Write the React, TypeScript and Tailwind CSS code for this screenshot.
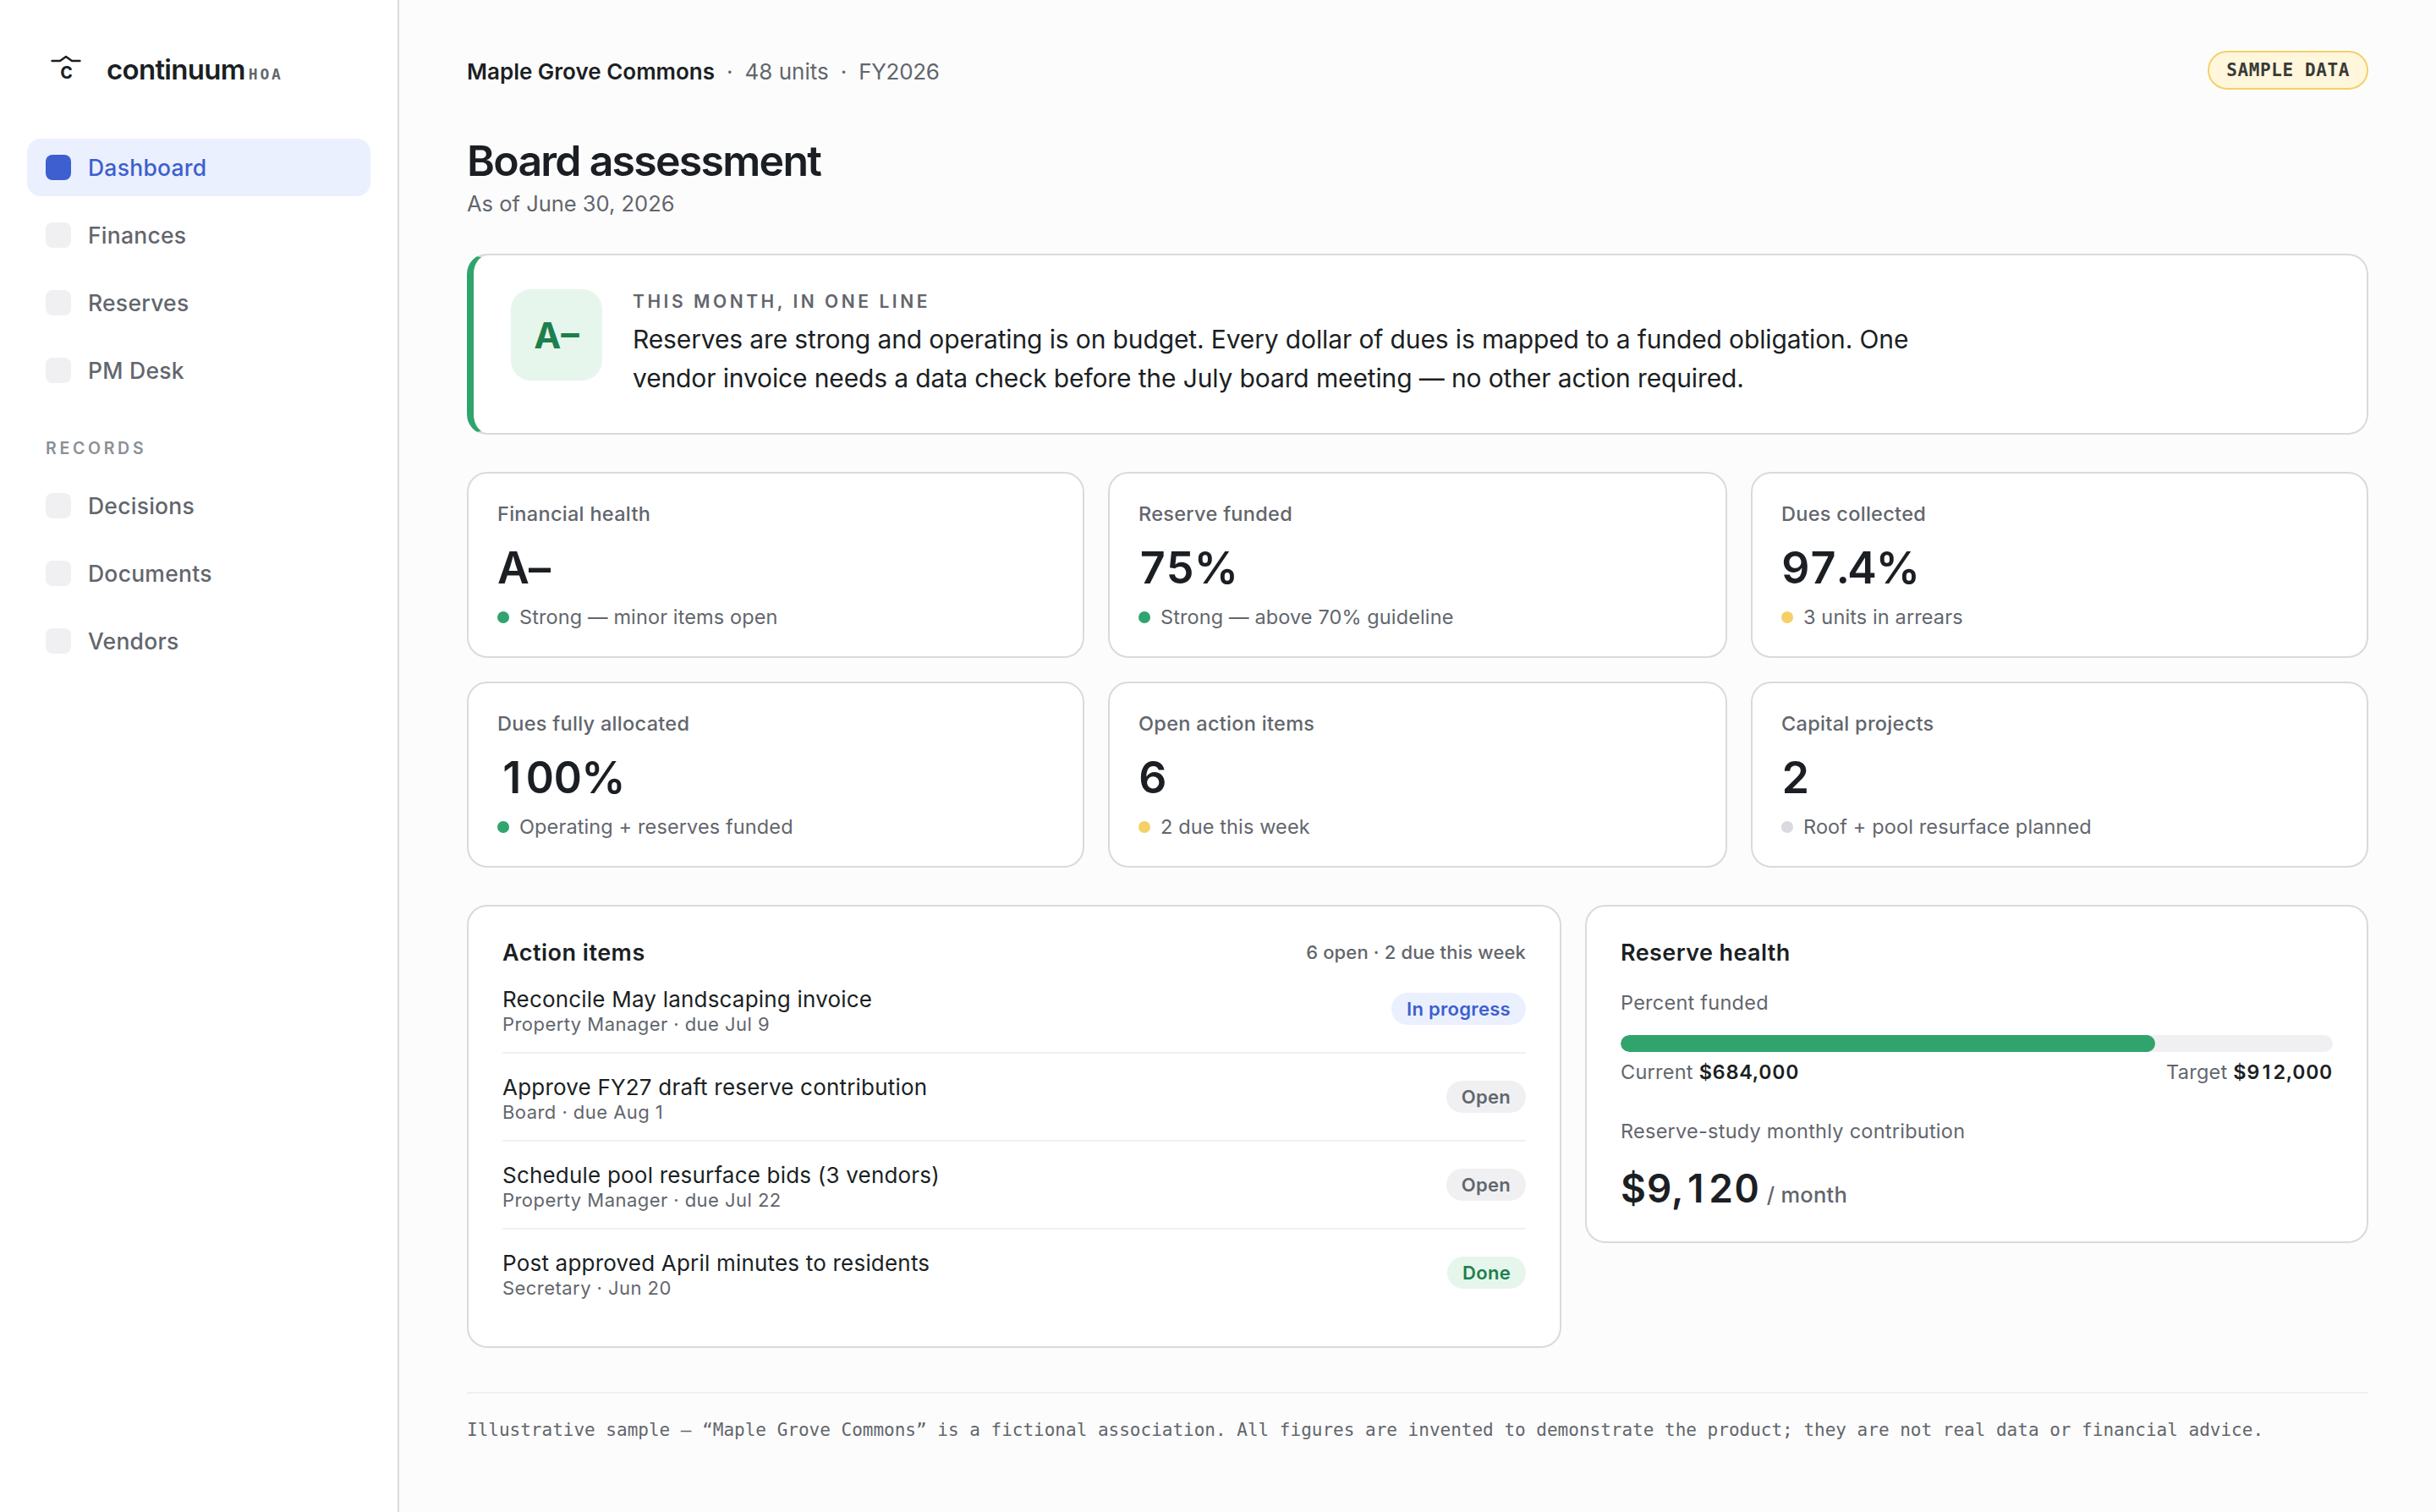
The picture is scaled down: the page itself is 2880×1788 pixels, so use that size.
import clsx from 'clsx'

type Tone = 'good' | 'warn' | 'neutral'
type Status = 'In progress' | 'Open' | 'Done'

const mainNav = ['Dashboard', 'Finances', 'Reserves', 'PM Desk']
const recordsNav = ['Decisions', 'Documents', 'Vendors']

const metrics: { label: string; value: string; note: string; tone: Tone }[] = [
  { label: 'Financial health', value: 'A–', note: 'Strong — minor items open', tone: 'good' },
  { label: 'Reserve funded', value: '75%', note: 'Strong — above 70% guideline', tone: 'good' },
  { label: 'Dues collected', value: '97.4%', note: '3 units in arrears', tone: 'warn' },
  { label: 'Dues fully allocated', value: '100%', note: 'Operating + reserves funded', tone: 'good' },
  { label: 'Open action items', value: '6', note: '2 due this week', tone: 'warn' },
  { label: 'Capital projects', value: '2', note: 'Roof + pool resurface planned', tone: 'neutral' },
]

const actions: { title: string; meta: string; status: Status }[] = [
  { title: 'Reconcile May landscaping invoice', meta: 'Property Manager · due Jul 9', status: 'In progress' },
  { title: 'Approve FY27 draft reserve contribution', meta: 'Board · due Aug 1', status: 'Open' },
  { title: 'Schedule pool resurface bids (3 vendors)', meta: 'Property Manager · due Jul 22', status: 'Open' },
  { title: 'Post approved April minutes to residents', meta: 'Secretary · Jun 20', status: 'Done' },
]

const dotColor: Record<Tone, string> = {
  good: 'bg-[#30a46c]',
  warn: 'bg-[#f5d067]',
  neutral: 'bg-[#d9dae0]',
}

const statusColor: Record<Status, string> = {
  'In progress': 'bg-[#ebf0ff] text-[#3d5fd0]',
  Open: 'bg-[#f0f0f3] text-[#62666d]',
  Done: 'bg-[#e6f6ec] text-[#1d7f4e]',
}

// Inter's tabular 1 has a foot serif, so the plain 1 is centred in a digit-wide box instead
function Figures({ value }: { value: string }) {
  return (
    <span className="tabular-nums">
      {value.split('').map((char, i) =>
        char === '1' ? (
          <span key={i} className="inline-block w-[0.645em] text-center normal-nums">
            1
          </span>
        ) : (
          char
        ),
      )}
    </span>
  )
}

function Logo() {
  return (
    <svg className="h-10 w-12" viewBox="0 0 48 40" fill="none" aria-hidden="true">
      <path
        d="M7.5 12H17L24 7L31 12H40.5"
        stroke="#1b1f24"
        strokeWidth="2.4"
        strokeLinecap="round"
        strokeLinejoin="round"
      />
      <text x="24.7" y="32.8" textAnchor="middle" fill="#1b1f24" className="text-[26px] font-semibold">
        c
      </text>
    </svg>
  )
}

function NavItem({ label, active }: { label: string; active?: boolean }) {
  return (
    <a
      className={clsx(
        'flex h-[68px] items-center gap-5 rounded-[16px] pl-[22px] text-[26.5px] font-medium tracking-[0.25px]',
        active ? 'bg-[#ebf0ff] text-[#3d5fd0]' : 'text-[#62666d]',
      )}
    >
      <span className={clsx('size-[30px] rounded-[8px]', active ? 'bg-[#3d5fd0]' : 'bg-[#f0f0f3]')} />
      <span className="pt-0.5">{label}</span>
    </a>
  )
}

function Sidebar() {
  return (
    <aside className="w-[472px] shrink-0 border-r-2 border-[#d9dae0] bg-white px-8 pt-[60px]">
      <div className="flex h-11 pl-[22px]">
        <Logo />
        <div className="ml-6 flex items-baseline pt-0.5">
          <span className="text-[33px] leading-10 font-semibold tracking-[-0.7px]">continuum</span>
          <span className="ml-1 font-['DejaVu_Sans_Mono',monospace] text-[18px] font-bold tracking-[2.8px] text-[#62666d]">
            HOA
          </span>
        </div>
      </div>

      <nav className="mt-[60px] flex flex-col gap-3">
        {mainNav.map((label, i) => (
          <NavItem key={label} label={label} active={i === 0} />
        ))}
      </nav>

      <div className="mt-[46px] mb-[22px] pl-[22px] text-[19.5px] leading-6 font-semibold tracking-[3.7px] text-[#8b8f96]">
        RECORDS
      </div>
      <nav className="flex flex-col gap-3">
        {recordsNav.map((label) => (
          <NavItem key={label} label={label} />
        ))}
      </nav>
    </aside>
  )
}

function Summary() {
  return (
    <section className="mt-[43px] flex h-[214px] gap-9 rounded-[24px] border-2 border-l-8 border-[#d9dae0] border-l-[#30a46c] bg-white pt-10 pl-11">
      <div className="flex size-[108px] shrink-0 items-center justify-center rounded-[24px] bg-[#e6f6ec] text-[43px] font-bold text-[#1d7f4e]">
        A–
      </div>
      <div>
        <div className="pt-px text-[21px] leading-7 font-semibold tracking-[3.55px] text-[#62666d]">
          THIS MONTH, IN ONE LINE
        </div>
        <p className="mt-[7px] max-w-[1530px] text-[30px] leading-[46px] tracking-[-0.13px]">
          Reserves are strong and operating is on budget. Every dollar of dues is mapped to a funded obligation. One
          vendor invoice needs a data check before the July board meeting — no other action required.
        </p>
      </div>
    </section>
  )
}

function MetricCard({ label, value, note, tone }: (typeof metrics)[number]) {
  return (
    <div className="h-[220px] rounded-[24px] border-2 border-[#d9dae0] bg-white px-[34px] pt-[34px]">
      <div className="text-[23.5px] leading-[27px] font-medium tracking-[0.3px] text-[#62666d]">{label}</div>
      <div className="mt-[21px] text-[52px] leading-[60px] font-semibold tracking-[-0.8px]">
        <Figures value={value} />
      </div>
      <div className="mt-[13px] flex items-center gap-3 text-[23.5px] leading-7 tracking-[0.12px] text-[#62666d]">
        <span className={clsx('size-3.5 rounded-full', dotColor[tone])} />
        <span className="pt-px">{note}</span>
      </div>
    </div>
  )
}

function ActionItems() {
  return (
    <section className="h-[524px] rounded-[24px] border-2 border-[#d9dae0] bg-white px-10 pt-10">
      <div className="flex h-7 justify-between leading-7">
        <h2 className="pt-px text-[27px] font-semibold tracking-[0.5px]">Action items</h2>
        <span className="text-[22px] font-medium tracking-[0.15px] text-[#62666d]">6 open · 2 due this week</span>
      </div>
      <ul className="mt-0.5 divide-y-2 divide-[#f0f0f3]">
        {actions.map((item) => (
          <li key={item.title} className="flex h-[104px] items-center justify-between last:h-[102px]">
            <div className="pt-0.5">
              <div className="text-[26px] leading-[33px] tracking-[0.2px]">{item.title}</div>
              <div className="text-[22px] leading-[26px] tracking-[0.45px] text-[#62666d]">{item.meta}</div>
            </div>
            <span
              className={clsx(
                'flex h-[38px] items-center rounded-full px-[18px] pt-px text-[22px] font-semibold tracking-[0.3px]',
                statusColor[item.status],
              )}
            >
              {item.status}
            </span>
          </li>
        ))}
      </ul>
    </section>
  )
}

function ReserveHealth() {
  const current = 684000
  const target = 912000

  return (
    <section className="h-[400px] rounded-[24px] border-2 border-[#d9dae0] bg-white px-10 pt-[41px] text-[23.5px] leading-7 tracking-[0.25px] text-[#62666d]">
      <h2 className="text-[27px] leading-7 font-semibold tracking-[0.4px] text-[#1b1f24]">Reserve health</h2>
      <div className="mt-[31px]">Percent funded</div>
      <div className="mt-6 h-5 overflow-hidden rounded-full bg-[#f0f0f3]">
        <div className="h-full rounded-full bg-[#30a46c]" style={{ width: `${(current / target) * 100}%` }} />
      </div>
      <div className="mt-2.5 flex justify-between">
        <span>
          Current{' '}
          <b className="font-semibold tracking-[0.7px] text-[#1b1f24]">
            <Figures value={`$${current.toLocaleString('en-US')}`} />
          </b>
        </span>
        <span>
          Target{' '}
          <b className="font-semibold tracking-[0.7px] text-[#1b1f24]">
            <Figures value={`$${target.toLocaleString('en-US')}`} />
          </b>
        </span>
      </div>
      <div className="mt-[42px]">Reserve-study monthly contribution</div>
      <div className="mt-[25px] flex items-baseline gap-2 leading-[56px]">
        <span className="text-[46px] font-semibold tracking-[0.7px] text-[#1b1f24]">
          <Figures value="$9,120" />
        </span>
        <span className="text-[25.5px] font-medium">/ month</span>
      </div>
    </section>
  )
}

export default function App() {
  return (
    <div className="flex min-h-screen bg-[#fcfcfc] font-['Inter',sans-serif] text-[#1b1f24]">
      <Sidebar />
      <main className="flex-1 px-20 pt-[60px]">
        <header className="flex h-[46px] items-center justify-between">
          <div className="flex gap-3.5 pt-[3px] text-[26px] text-[#62666d]">
            <span className="font-semibold text-[#1b1f24]">Maple Grove Commons</span>
            <span>·</span>
            <span>48 units</span>
            <span>·</span>
            <span className="tracking-[-0.3px]">FY2026</span>
          </div>
          <span className="flex h-[46px] items-center rounded-full border-2 border-[#f5d067] bg-[#fff6dc] px-5 pt-px font-['DejaVu_Sans_Mono',monospace] text-[21px] font-bold tracking-[0.6px] text-[#3a3a36]">
            SAMPLE DATA
          </span>
        </header>

        <h1 className="mt-[54px] text-[50px] leading-[60px] font-semibold tracking-[-1.75px]">Board assessment</h1>
        <p className="mt-[5px] text-[25.5px] leading-8 text-[#62666d]">As of June 30, 2026</p>

        <Summary />

        <div className="mt-11 grid grid-cols-[730px_732px_730px] gap-7">
          {metrics.map((metric) => (
            <MetricCard key={metric.label} {...metric} />
          ))}
        </div>

        <div className="mt-11 grid grid-cols-[1294px_926px] items-start gap-7">
          <ActionItems />
          <ReserveHealth />
        </div>

        <footer className="mt-[52px] border-t-2 border-[#f0f0f3] pt-[27px] font-['DejaVu_Sans_Mono',monospace] text-[21px] leading-8 text-[#62666d]">
          Illustrative sample — “Maple Grove Commons” is a fictional association. All figures are invented to
          demonstrate the product; they are not real data or financial advice.
        </footer>
      </main>
    </div>
  )
}
